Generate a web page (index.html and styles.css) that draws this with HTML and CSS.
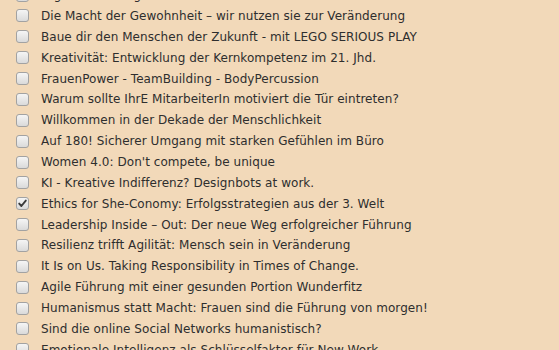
FILE: index.html
```html
<!DOCTYPE html>
<html lang="de">
<head>
<meta charset="utf-8">
<title>Themen</title>
<link rel="stylesheet" href="styles.css">
</head>
<body>
<ul class="topics">
  <li class="topic"><span class="box"></span><span class="label">Digitale Führung im Wandel</span></li>
  <li class="topic"><span class="box"></span><span class="label">Die Macht der Gewohnheit – wir nutzen sie zur Veränderung</span></li>
  <li class="topic"><span class="box"></span><span class="label">Baue dir den Menschen der Zukunft - mit LEGO SERIOUS PLAY</span></li>
  <li class="topic"><span class="box"></span><span class="label">Kreativität: Entwicklung der Kernkompetenz im 21. Jhd.</span></li>
  <li class="topic"><span class="box"></span><span class="label">FrauenPower - TeamBuilding - BodyPercussion</span></li>
  <li class="topic"><span class="box"></span><span class="label">Warum sollte IhrE MitarbeiterIn motiviert die Tür eintreten?</span></li>
  <li class="topic"><span class="box"></span><span class="label">Willkommen in der Dekade der Menschlichkeit</span></li>
  <li class="topic"><span class="box"></span><span class="label">Auf 180! Sicherer Umgang mit starken Gefühlen im Büro</span></li>
  <li class="topic"><span class="box"></span><span class="label">Women 4.0: Don't compete, be unique</span></li>
  <li class="topic"><span class="box"></span><span class="label">KI - Kreative Indifferenz? Designbots at work.</span></li>
  <li class="topic"><span class="box checked"><svg viewBox="0 0 13 13" width="13" height="13"><path d="M3.2 6.6 L5.4 9 L9.8 3.6" fill="none" stroke="#3a3a3a" stroke-width="1.9" stroke-linecap="round" stroke-linejoin="round"/></svg></span><span class="label">Ethics for She-Conomy: Erfolgsstrategien aus der 3. Welt</span></li>
  <li class="topic"><span class="box"></span><span class="label">Leadership Inside – Out: Der neue Weg erfolgreicher Führung</span></li>
  <li class="topic"><span class="box"></span><span class="label">Resilienz trifft Agilität: Mensch sein in Veränderung</span></li>
  <li class="topic"><span class="box"></span><span class="label">It Is on Us. Taking Responsibility in Times of Change.</span></li>
  <li class="topic"><span class="box"></span><span class="label">Agile Führung mit einer gesunden Portion Wunderfitz</span></li>
  <li class="topic"><span class="box"></span><span class="label">Humanismus statt Macht: Frauen sind die Führung von morgen!</span></li>
  <li class="topic"><span class="box"></span><span class="label">Sind die online Social Networks humanistisch?</span></li>
  <li class="topic"><span class="box"></span><span class="label">Emotionale Intelligenz als Schlüsselfaktor für New Work</span></li>
</ul>
</body>
</html>
```
FILE: styles.css
```css
html, body {
  margin: 0;
  padding: 0;
  background: #f2d9b9;
  height: 100%;
  overflow: hidden;
}
.topics {
  list-style: none;
  margin: -15.3px 0 0 0;
  padding: 0 0 0 16px;
  font-family: "DejaVu Sans", Verdana, sans-serif;
  font-size: 12px;
  letter-spacing: 0.05px;
  color: #2e2e2e;
}
.topic {
  display: flex;
  align-items: center;
  height: 20.87px;
}
.box {
  flex: none;
  width: 11px;
  height: 11px;
  border: 1px solid #a2a2a2;
  border-radius: 3px;
  background: linear-gradient(#f5f5f5, #dadada);
  margin-right: 12px;
  position: relative;
  box-sizing: content-box;
}
.box svg {
  position: absolute;
  left: -1px;
  top: -1px;
}
.label {
  white-space: nowrap;
}
```
